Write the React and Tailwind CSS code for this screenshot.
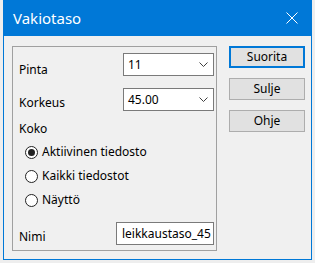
import React from "react";

const font = { fontFamily: '"Noto Sans", "Open Sans", sans-serif' };

const Chevron = () => (
  <svg width="9" height="5" viewBox="0 0 9 5" className="shrink-0">
    <path d="M0.5 0.5 L4.5 4.5 L8.5 0.5" fill="none" stroke="#404040" strokeWidth="1" />
  </svg>
);

const Combo = ({ value }) => (
  <div className="flex items-center justify-between w-[91px] h-[23px] bg-white border border-[#7a7a7a] pl-[4px] pr-[5px] text-[12px] leading-4 text-black">
    <span>{value}</span>
    <Chevron />
  </div>
);

const Radio = ({ label, checked }) => (
  <div className="flex items-center h-4 ml-[6px]">
    <div className="w-[13px] h-[13px] rounded-full border border-[#222] bg-white flex items-center justify-center">
      {checked && <div className="w-[7px] h-[7px] rounded-full bg-[#222]" />}
    </div>
    <span className="ml-[4px]">{label}</span>
  </div>
);

const Button = ({ label, primary }) => (
  <button
    className={
      primary
        ? "w-[76px] h-[22px] bg-[#e1e1e1] border-2 border-[#0078d7] text-[12px] leading-4 text-black"
        : "w-[76px] h-[22px] bg-[#e1e1e1] border border-[#adadad] text-[12px] leading-4 text-black"
    }
  >
    {label}
  </button>
);

export default function App() {
  return (
    <div className="w-[315px] h-[263px] bg-[#eeeeee] overflow-hidden" style={font}>
      <div className="ml-[3px] w-[309px] h-[260px] bg-[#f0f0f0] border-x border-b border-[#0078d7] flex flex-col">
        <div className="h-[36px] bg-[#0078d7] flex items-center justify-between pl-[9px] pr-[13px] text-white">
          <span className="text-[15px] leading-5">Vakiotaso</span>
          <svg width="12" height="12" viewBox="0 0 12 12">
            <path d="M0.5 0.5 L11.5 11.5 M11.5 0.5 L0.5 11.5" stroke="white" strokeWidth="1" />
          </svg>
        </div>
        <div className="flex items-start pl-[8px] pt-[10px] text-[12px] leading-4 text-black">
          <div className="w-[205px] h-[205px] border border-[#a0a0a0] pl-[6px] pr-[2px] pb-[5px] flex flex-col">
            <div className="flex justify-between items-start mt-[6px]">
              <span className="mt-[9px]">Pinta</span>
              <Combo value="11" />
            </div>
            <div className="flex justify-between items-start mt-[10px]">
              <span className="mt-[7px]">Korkeus</span>
              <Combo value="45.00" />
            </div>
            <div className="mt-[10px]">Koko</div>
            <div className="flex flex-col gap-2 mt-[7px]">
              <Radio label="Aktiivinen tiedosto" checked />
              <Radio label="Kaikki tiedostot" />
              <Radio label="Näyttö" />
            </div>
            <div className="flex justify-between items-end mt-auto">
              <span>Nimi</span>
              <div className="w-[98px] h-[23px] bg-white border border-[#7a7a7a] pl-[5px] flex items-center overflow-hidden whitespace-nowrap">
                leikkaustaso_45
              </div>
            </div>
          </div>
          <div className="ml-[12px] flex flex-col gap-[10px]">
            <Button label="Suorita" primary />
            <Button label="Sulje" />
            <Button label="Ohje" />
          </div>
        </div>
      </div>
    </div>
  );
}
